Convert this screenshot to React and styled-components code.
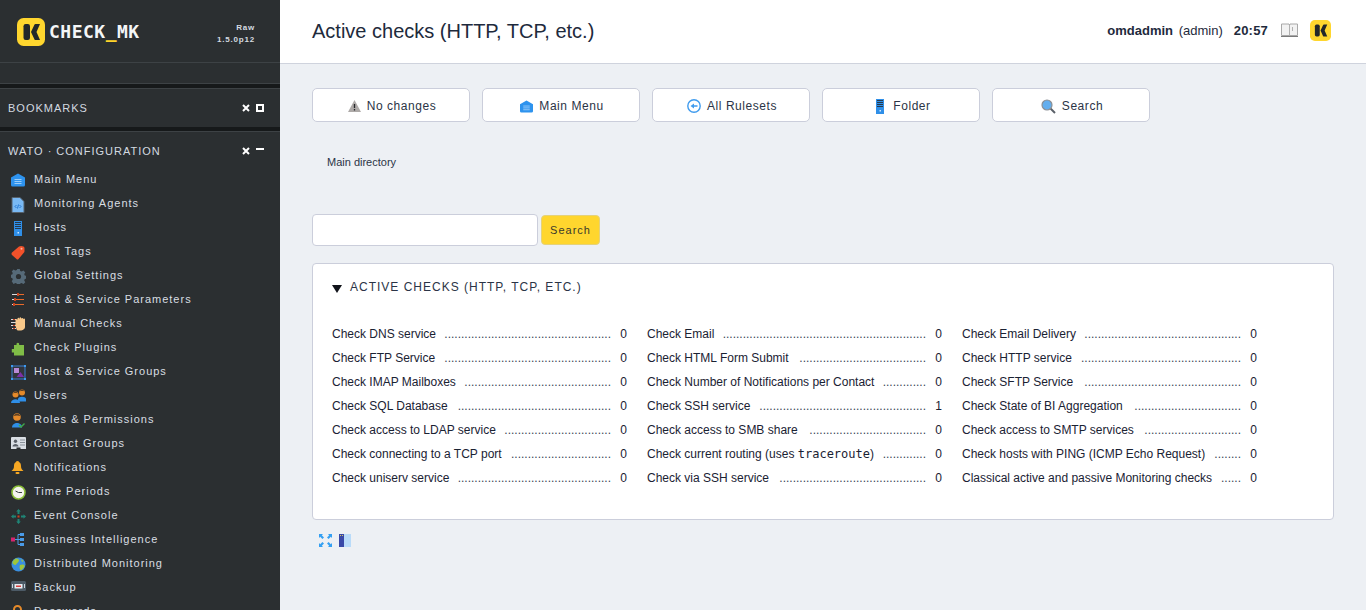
import React, { useLayoutEffect, useRef, useState } from 'react';
import styled, { createGlobalStyle } from 'styled-components';

const GlobalStyle = createGlobalStyle`
  html, body {
    margin: 0;
    padding: 0;
    height: 100%;
    overflow: hidden;
    background: #edf0f4;
    font-family: "Liberation Sans", Arial, sans-serif;
  }
  * {
    box-sizing: border-box;
  }
`;

const Page = styled.div`
  display: flex;
  height: 610px;
  overflow: hidden;
`;

const Sidebar = styled.aside`
  width: 280px;
  flex: none;
  height: 610px;
  overflow: hidden;
  background: #2b2f31;
  color: #d9dee2;
`;

const Brand = styled.div`
  height: 63px;
  display: flex;
  align-items: center;
  justify-content: space-between;
  padding: 1px 25px 0 17px;
  border-bottom: 1px solid #3d4245;
`;

const BrandLogo = styled.div`
  display: flex;
  align-items: center;
  gap: 4px;
`;

const Wordmark = styled.span`
  font-family: "DejaVu Sans Mono", monospace;
  font-weight: 700;
  font-size: 18px;
  letter-spacing: 0.5px;
  color: #f4f6f7;
  em {
    font-style: normal;
    color: #ffd42a;
  }
`;

const Version = styled.div`
  padding-top: 5px;
  font-size: 8px;
  font-weight: 700;
  letter-spacing: 0.8px;
  line-height: 12px;
  text-align: right;
  color: #d5dbe0;
`;

const Spacer = styled.div`
  height: 20px;
`;

const Snapin = styled.section`
  border-top: 1px solid #3d4245;
`;

const SnapinGap = styled.div`
  height: 4px;
  background: #16191a;
`;

const SnapinHead = styled.div`
  height: ${(p) => p.$height}px;
  padding: ${(p) => p.$top}px 16px 0 8px;
  display: flex;
  align-items: center;
  justify-content: space-between;
  border-top: 1px solid #3d4245;
  font-size: 11px;
  letter-spacing: 1px;
  color: #d3dae0;
`;

const SnapinControls = styled.div`
  display: flex;
  align-items: center;
  gap: 6px;
`;

const Menu = styled.ul`
  list-style: none;
  margin: 0;
  padding: 0;
`;

const MenuItem = styled.li`
  height: 24px;
  display: flex;
  align-items: center;
  gap: 8px;
  padding-left: 11px;
  font-size: 11px;
  letter-spacing: 1px;
  color: #d9dee2;
  white-space: nowrap;
`;

const MenuIcon = styled.span`
  width: 15px;
  height: 15px;
  flex: none;
  display: flex;
  margin-top: 2px;
`;

const Main = styled.main`
  flex: 1;
  min-width: 0;
  display: flex;
  flex-direction: column;
`;

const TopBar = styled.header`
  height: 64px;
  flex: none;
  display: flex;
  align-items: center;
  justify-content: space-between;
  padding: 0 35px 0 32px;
  background: #fff;
  border-bottom: 1px solid #cfd3dd;
`;

const Title = styled.h1`
  margin: 0;
  font-size: 20px;
  font-weight: 400;
  color: #1e2a3c;
`;

const TopInfo = styled.div`
  display: flex;
  align-items: center;
  gap: 12px;
  margin-top: -2px;
  font-size: 13px;
  color: #1e2a3c;
  b {
    font-weight: 700;
  }
`;

const UserName = styled.span`
  margin-right: -1px;
  word-spacing: 2px;
`;

const Clock = styled.b`
  margin-right: 1px;
  letter-spacing: 0.2px;
`;

const Content = styled.div`
  padding: 24px 32px 0;
`;

const Buttons = styled.div`
  display: flex;
  gap: 12px;
`;

const ActionButton = styled.button`
  width: 158px;
  height: 34px;
  display: flex;
  align-items: center;
  justify-content: center;
  gap: 6px;
  padding: 2px 0 0 2px;
  background: #fff;
  border: 1px solid #cbcedb;
  border-radius: 5px;
  font-family: inherit;
  font-size: 12px;
  letter-spacing: 0.55px;
  color: #2b3446;
`;

const Breadcrumb = styled.div`
  margin: 34px 0 0 15px;
  height: 13px;
  font-size: 11px;
  line-height: 13px;
  color: #2b3446;
`;

const SearchRow = styled.form`
  display: flex;
  align-items: center;
  gap: 3px;
  margin-top: 45px;
`;

const SearchInput = styled.input`
  width: 226px;
  height: 32px;
  background: #fff;
  border: 1px solid #cbcedb;
  border-radius: 4px;
`;

const SearchButton = styled.button`
  width: 59px;
  height: 30px;
  padding: 0;
  background: #ffd62e;
  border: 1px solid #e5d27a;
  border-radius: 4px;
  font-family: inherit;
  font-size: 11px;
  letter-spacing: 1px;
  color: #3a3a2c;
`;

const Panel = styled.section`
  margin-top: 17px;
  width: 1022px;
  height: 257px;
  padding: 15px 19px 0;
  background: #fff;
  border: 1px solid #cbcedb;
  border-radius: 4px;
`;

const PanelTitle = styled.div`
  display: flex;
  align-items: center;
  gap: 8px;
  height: 16px;
  font-size: 12px;
  letter-spacing: 1px;
  text-transform: uppercase;
  color: #2b3446;
`;

const Triangle = styled.span`
  width: 0;
  height: 0;
  margin-top: 3px;
  border-left: 5px solid transparent;
  border-right: 5px solid transparent;
  border-top: 8px solid #10131a;
`;

const RuleGrid = styled.div`
  display: grid;
  grid-template-columns: repeat(3, 295px);
  column-gap: 20px;
  grid-auto-rows: 24px;
  margin-top: 27px;
`;

const RuleRow = styled.div`
  display: flex;
  align-items: center;
  font-size: 12px;
  line-height: 14px;
  color: #1a2233;
  white-space: nowrap;
  code {
    font-family: "DejaVu Sans Mono", monospace;
    font-size: 12px;
    line-height: 1;
  }
`;

const Dots = styled.span`
  flex: 1;
  min-width: 0;
  height: 14px;
  overflow: hidden;
  text-align: right;
  margin: 0 8px;
  color: #3b4354;
`;

const Count = styled.span`
  width: 8px;
  text-align: right;
`;

const FooterIcons = styled.div`
  display: flex;
  align-items: center;
  gap: 7px;
  margin: 14px 0 0 7px;
`;

// as many dots as fit in the space left by the label
const Leader = () => {
  const ref = useRef(null);
  const [count, setCount] = useState(0);
  useLayoutEffect(() => {
    setCount(Math.floor(ref.current.clientWidth / 3.334));
  }, []);
  return <Dots ref={ref}>{'.'.repeat(count)}</Dots>;
};

const Logo = ({ size }) => (
  <svg width={size} height={size} viewBox="0 0 28 28">
    <rect width="28" height="28" rx="6.500" fill="#ffd62e" />
    <rect x="6.500" y="6" width="6.500" height="16" rx="2.200" fill="#23272a" />
    <path d="M14 14L17.500 6.500Q17.800 6 18.500 6H23L19.500 14L23 22H18.500Q17.800 22 17.500 21.500z" fill="#23272a" />
  </svg>
);

const MainMenuIcon = ({ size = 14 }) => (
  <svg width={size} height={size} viewBox="0 0 14 14">
    <path d="M0 4.500L7 .5l7 4V12a1.500 1.500 0 0 1-1.500 1.500h-11A1.500 1.500 0 0 1 0 12z" fill="#2e93ee" />
    <path d="M3.500 6.500h7M3.500 8.500h7M3.500 10.500h7" stroke="#9ccdf8" strokeWidth="1" />
  </svg>
);

const SmallMainMenuIcon = () => <MainMenuIcon size={13} />;

const AgentsIcon = () => (
  <svg width="14" height="16" viewBox="0 0 14 16">
    <path d="M1 .5h8l4 4V15.500H1z" fill="#79b9f4" stroke="#55616c" strokeWidth="1" />
    <path d="M5.500 8L4 9.500 5.500 11M8.500 8L10 9.500 8.500 11M7.500 7.500l-1 4" stroke="#2477d2" strokeWidth="1" fill="none" />
  </svg>
);

const HostIcon = () => (
  <svg width="14" height="15" viewBox="0 0 14 15">
    <rect x="3" y="0" width="8" height="15" fill="#2f8fe8" />
    <path d="M4 1.500h6M4 3.500h6M4 5.500h6M4 7.500h6" stroke="#27394a" strokeWidth="1" />
    <rect x="6.500" y="11" width="1.500" height="1.500" fill="#cfe6fb" />
  </svg>
);

const TagIcon = () => (
  <svg width="14" height="15" viewBox="0 0 14 15">
    <path d="M1 7.500L8 1.500Q9 1 10 1L12.500 1.500Q13.500 2 13.500 3V6Q13.500 7 13 7.500L7.500 14Q6.500 15 5.500 14L1 10Q0 8.500 1 7.500z" fill="#f2512a" />
    <circle cx="10.500" cy="3.800" r="1" fill="#f9b49d" />
  </svg>
);

const GearIcon = () => (
  <svg width="15" height="15" viewBox="0 0 15 15">
    <path
      d="M6.200 0h2.600l.4 2 1.500.6L12.400 1.500l1.900 1.900-1.100 1.700.6 1.500 2 .4v2.600l-2 .4-.6 1.500 1.100 1.700-1.900 1.900-1.700-1.100-1.500.6-.4 2H6.200l-.4-2-1.500-.6-1.700 1.100L.7 12.200l1.100-1.700-.6-1.500-2-.4V6l2-.4.6-1.500L.7 2.400 2.600.5l1.700 1.100 1.500-.6z"
      fill="#566a78"
    />
    <circle cx="7.500" cy="7.500" r="2.600" fill="#2b2f31" />
  </svg>
);

const ParamsIcon = () => (
  <svg width="14" height="13" viewBox="0 0 14 13">
    <path d="M1 1.500h12M1 6.500h12M1 11.500h12" stroke="#d7d9da" strokeWidth="1.200" />
    <path d="M7 1.500h6M4 6.500h9M3 11.500h10" stroke="#ea6a2a" strokeWidth="1.200" />
    <rect x="6" y="0" width="2" height="3" fill="#c9421e" />
    <rect x="3" y="5" width="2" height="3" fill="#c9421e" />
    <rect x="2" y="10" width="2" height="3" fill="#c9421e" />
  </svg>
);

const HandIcon = () => (
  <svg width="15" height="15" viewBox="0 0 15 15">
    <path d="M0 2.500h5M0 5.500h5M0 8.500h5M1 11.500h4" stroke="#d7d9da" strokeWidth="1" />
    <path d="M2 2.500h2M2 8.500h2M2 11.500h2" stroke="#c9421e" strokeWidth="1" />
    <path d="M4.500 3c0-1.200 1.800-1.200 1.800 0 0-3 2-3 2-.5 0-2.800 2-2.800 2-.2 0-1.800 1.800-1.800 1.800 0 0-1 1.900-1 1.900 0v7.500c0 2.700-2.500 3.700-4.500 3.700S6 14 5.500 12L4.500 9z" fill="#f9c98a" />
  </svg>
);

const PluginIcon = () => (
  <svg width="14" height="15" viewBox="0 0 14 15">
    <path d="M3 4h2.600C4.700 1 9 1 8.100 4H13v10.500H3v-3H.8V8H3z" fill="#80bd47" />
  </svg>
);

const GroupsIcon = () => (
  <svg width="15" height="15" viewBox="0 0 15 15">
    <rect x="1" y="1" width="13" height="13" fill="#33363c" stroke="#3a7fd0" strokeWidth="1" />
    <path d="M0 0h2v2H0zM13 0h2v2h-2zM0 13h2v2H0zM13 13h2v2h-2z" fill="#3d9bf0" />
    <rect x="3" y="3" width="5" height="5" fill="#b98ad6" />
    <path d="M5.500 12l4-5 3.500 5z" fill="#7b2fa8" />
  </svg>
);

const UsersIcon = () => (
  <svg width="15" height="14" viewBox="0 0 15 14">
    <path d="M7 10c0-3 8-3 8 0v2.500H7z" fill="#2f8fe8" />
    <circle cx="11" cy="3.500" r="3" fill="#e58a2a" />
    <path d="M8.300 2.500a3 3 0 0 1 5.400 0c-1.800-.6-3.600-.6-5.400 0z" fill="#5c4126" />
    <path d="M0 14c0-5 9-5 9 0z" fill="#2f8fe8" />
    <circle cx="4.500" cy="5.500" r="3" fill="#e58a2a" />
    <path d="M1.800 4.500a3 3 0 0 1 5.400 0c-1.800-.6-3.600-.6-5.400 0z" fill="#5c4126" />
  </svg>
);

const RolesIcon = () => (
  <svg width="14" height="15" viewBox="0 0 14 15">
    <path d="M1 14.500c0-6 10-6 10 0z" fill="#2f8fe8" />
    <circle cx="6" cy="4" r="3.800" fill="#e58a2a" />
    <path d="M2.500 3a3.800 3.800 0 0 1 7 0c-2.300-.7-4.700-.7-7 0z" fill="#5c4126" />
    <path d="M8 12l2 2 3.500-3.500" stroke="#3ea84a" strokeWidth="1.400" fill="none" />
  </svg>
);

const ContactIcon = () => (
  <svg width="15" height="12" viewBox="0 0 15 12">
    <path d="M1 0h13a1 1 0 0 1 1 1v11H9.500V10.500h-4V12H0V1a1 1 0 0 1 1-1z" fill="#d9dee4" />
    <circle cx="4.500" cy="4.200" r="1.700" fill="#5a6068" />
    <path d="M1.500 9.500c0-3.500 6-3.500 6 0z" fill="#5a6068" />
    <path d="M9 3h5M9 5.500h5M9 8h5" stroke="#8a929a" strokeWidth="1" />
  </svg>
);

const BellIcon = () => (
  <svg width="13" height="13" viewBox="0 0 13 13">
    <path d="M6.500 0C8 0 8 1 8 1c1.500.8 2 2 2 4 0 2.500 1 3.500 2.500 5H.5C2 8.500 3 7.500 3 5c0-2 .5-3.200 2-4 0 0 0-1 1.500-1z" fill="#f7a823" />
    <rect x="4.500" y="11" width="4" height="2" rx="1" fill="#f7a823" />
  </svg>
);

const ClockIcon = () => (
  <svg width="15" height="15" viewBox="0 0 15 15">
    <circle cx="7.500" cy="7.500" r="6.500" fill="#f4f4ee" stroke="#8cbf3a" strokeWidth="1.600" />
    <path d="M7.500 7.500L4.500 6M7.500 7.500H11" stroke="#3a3f42" strokeWidth="1" />
  </svg>
);

const EventIcon = () => (
  <svg width="15" height="15" viewBox="0 0 15 15">
    <path
      d="M7.500 0l2.300 2.500H8.500V5h-2V2.500H5.200zM7.500 15l-2.300-2.500h1.300V10h2v2.500h1.300zM0 7.500l2.500-2.300v1.300H5v2H2.500v1.300zM15 7.500l-2.500 2.300V8.500H10v-2h2.500V5.200z"
      fill="#1f8576"
    />
    <rect x="6.500" y="6.500" width="2" height="2" fill="#c9421e" />
  </svg>
);

const BiIcon = () => (
  <svg width="14" height="13" viewBox="0 0 14 13">
    <rect x="0" y="4.500" width="4" height="4" fill="#d6246e" />
    <path d="M4 6.500h4M7 1.500v10M7 1.500h2M7 6.500h2M7 11.500h2" stroke="#4a9be8" strokeWidth="1" fill="none" />
    <rect x="9" y="0" width="4" height="3" fill="#4a9be8" />
    <rect x="9" y="5" width="4" height="3" fill="#4a9be8" />
    <rect x="9" y="10" width="4" height="3" fill="#4a9be8" />
  </svg>
);

const GlobeIcon = () => (
  <svg width="15" height="15" viewBox="0 0 15 15">
    <circle cx="7.500" cy="7.500" r="7" fill="#3a8fe0" />
    <path d="M4 2c2-1 4 0 4 1.500S6 6 5 7.500 2 7 1.500 6 2.500 3 4 2zM9 8c2-1 4-.5 4.500.5S12 12 10.500 13 8 10 9 8zM10 2l2.500 2L11 5z" fill="#9fc63b" />
  </svg>
);

const BackupIcon = () => (
  <svg width="15" height="11" viewBox="0 0 15 11">
    <rect width="15" height="10" rx="1.500" fill="#4c5a66" />
    <rect x="3.500" y="3" width="8" height="4.500" fill="#e9edf0" />
    <rect x="5" y="4.500" width="5" height="1.500" fill="#d63e3e" />
    <path d="M1.500 3v4M13.500 3v4" stroke="#c9d2d9" strokeWidth="1" />
  </svg>
);

const KeyIcon = () => (
  <svg width="13" height="15" viewBox="0 0 13 15">
    <circle cx="6.500" cy="4.500" r="3.500" fill="none" stroke="#e58a2a" strokeWidth="2" />
  </svg>
);

const WarnIcon = () => (
  <svg width="13" height="12" viewBox="0 0 13 12">
    <path d="M6.500 0L13 12H0z" fill="#aeaaa8" />
    <path d="M6.500 4v4M6.500 9v1.500" stroke="#25262a" strokeWidth="1.300" />
  </svg>
);

const BackIcon = () => (
  <svg width="14" height="14" viewBox="0 0 14 14">
    <circle cx="7" cy="7" r="6.200" fill="#fff" stroke="#3f9bee" strokeWidth="1.400" />
    <path d="M3.500 7L7 4.500v1.700h3.500v1.600H7v1.700z" fill="#3f9bee" />
  </svg>
);

const LensIcon = () => (
  <svg width="15" height="15" viewBox="0 0 15 15">
    <path d="M9.500 9.500L14 14" stroke="#5a6068" strokeWidth="2" />
    <circle cx="6" cy="6" r="5" fill="#63aeee" stroke="#8b8f94" strokeWidth="1.200" />
  </svg>
);

const BookIcon = () => (
  <svg width="17" height="15" viewBox="0 0 17 15">
    <path d="M.5 1h7.500l.5 1 .5-1h7.500v11.500H.5z" fill="#f2f2f2" stroke="#a8a8a8" strokeWidth="1" />
    <path d="M8.500 2v10.500M11.500 4v4" stroke="#b0b0b0" strokeWidth="1" />
    <path d="M0 13h17v1H0z" fill="#7a7a7a" />
  </svg>
);

const ExpandIcon = () => (
  <svg width="13" height="13" viewBox="0 0 13 13">
    <path
      d="M0 0h4L2.800 1.200 5 3.400 3.400 5 1.200 2.800 0 4zM13 0v4l-1.200-1.200L9.600 5 8 3.400l2.200-2.200L9 0zM0 13V9l1.200 1.200L3.400 8 5 9.600l-2.200 2.200L4 13zM13 13H9l1.200-1.200L8 9.600 9.600 8l2.200 2.200L13 9z"
      fill="#35a0f2"
    />
  </svg>
);

const ColumnsIcon = () => (
  <svg width="12" height="13" viewBox="0 0 12 13">
    <rect width="12" height="13" fill="#b9dbf9" />
    <rect width="5" height="13" fill="#3949a8" />
    <rect x="1" y="1" width="1" height="1" fill="#d9c65a" />
    <rect x="3" y="1" width="1" height="1" fill="#d9c65a" />
  </svg>
);

const CloseGlyph = () => (
  <svg width="8" height="8" viewBox="0 0 8 8">
    <path d="M1 1l6 6M7 1L1 7" stroke="#fff" strokeWidth="2" />
  </svg>
);

const SquareGlyph = () => (
  <svg width="8" height="8" viewBox="0 0 8 8">
    <rect x="1" y="1" width="6" height="6" fill="none" stroke="#fff" strokeWidth="2" />
  </svg>
);

const MinusGlyph = () => (
  <svg width="8" height="8" viewBox="0 0 8 8">
    <rect y="1" width="8" height="2" fill="#fff" />
  </svg>
);

const menu = [
  ['Main Menu', MainMenuIcon],
  ['Monitoring Agents', AgentsIcon],
  ['Hosts', HostIcon],
  ['Host Tags', TagIcon],
  ['Global Settings', GearIcon],
  ['Host & Service Parameters', ParamsIcon],
  ['Manual Checks', HandIcon],
  ['Check Plugins', PluginIcon],
  ['Host & Service Groups', GroupsIcon],
  ['Users', UsersIcon],
  ['Roles & Permissions', RolesIcon],
  ['Contact Groups', ContactIcon],
  ['Notifications', BellIcon],
  ['Time Periods', ClockIcon],
  ['Event Console', EventIcon],
  ['Business Intelligence', BiIcon],
  ['Distributed Monitoring', GlobeIcon],
  ['Backup', BackupIcon],
  ['Passwords', KeyIcon],
];

const actions = [
  ['No changes', WarnIcon],
  ['Main Menu', SmallMainMenuIcon],
  ['All Rulesets', BackIcon],
  ['Folder', HostIcon],
  ['Search', LensIcon],
];

const rules = [
  ['Check DNS service', 0],
  ['Check Email', 0],
  ['Check Email Delivery', 0],
  ['Check FTP Service', 0],
  ['Check HTML Form Submit', 0],
  ['Check HTTP service', 0],
  ['Check IMAP Mailboxes', 0],
  ['Check Number of Notifications per Contact', 0],
  ['Check SFTP Service', 0],
  ['Check SQL Database', 0],
  ['Check SSH service', 1],
  ['Check State of BI Aggregation', 0],
  ['Check access to LDAP service', 0],
  ['Check access to SMB share', 0],
  ['Check access to SMTP services', 0],
  ['Check connecting to a TCP port', 0],
  [<>Check current routing (uses <code>traceroute</code>)</>, 0],
  ['Check hosts with PING (ICMP Echo Request)', 0],
  ['Check uniserv service', 0],
  ['Check via SSH service', 0],
  ['Classical active and passive Monitoring checks', 0],
];

export default function App() {
  return (
    <Page>
      <GlobalStyle />
      <Sidebar>
        <Brand>
          <BrandLogo>
            <Logo size={28} />
            <Wordmark>CHECK<em>_</em>MK</Wordmark>
          </BrandLogo>
          <Version>
            <div>Raw</div>
            <div>1.5.0p12</div>
          </Version>
        </Brand>
        <Spacer />
        <Snapin>
          <SnapinGap />
          <SnapinHead $height={39} $top={0}>
            BOOKMARKS
            <SnapinControls>
              <CloseGlyph />
              <SquareGlyph />
            </SnapinControls>
          </SnapinHead>
          <SnapinGap />
          <SnapinHead $height={36} $top={2}>
            WATO · CONFIGURATION
            <SnapinControls>
              <CloseGlyph />
              <MinusGlyph />
            </SnapinControls>
          </SnapinHead>
          <Menu>
            {menu.map(([label, Icon]) => (
              <MenuItem key={label}>
                <MenuIcon>
                  <Icon />
                </MenuIcon>
                {label}
              </MenuItem>
            ))}
          </Menu>
        </Snapin>
      </Sidebar>
      <Main>
        <TopBar>
          <Title>Active checks (HTTP, TCP, etc.)</Title>
          <TopInfo>
            <UserName>
              <b>omdadmin</b> (admin)
            </UserName>
            <Clock>20:57</Clock>
            <BookIcon />
            <Logo size={21} />
          </TopInfo>
        </TopBar>
        <Content>
          <Buttons>
            {actions.map(([label, Icon]) => (
              <ActionButton key={label}>
                <Icon />
                {label}
              </ActionButton>
            ))}
          </Buttons>
          <Breadcrumb>Main directory</Breadcrumb>
          <SearchRow>
            <SearchInput />
            <SearchButton type="button">Search</SearchButton>
          </SearchRow>
          <Panel>
            <PanelTitle>
              <Triangle />
              Active checks (HTTP, TCP, etc.)
            </PanelTitle>
            <RuleGrid>
              {rules.map(([label, count], i) => (
                <RuleRow key={i}>
                  <span>{label}</span>
                  <Leader />
                  <Count>{count}</Count>
                </RuleRow>
              ))}
            </RuleGrid>
          </Panel>
          <FooterIcons>
            <ExpandIcon />
            <ColumnsIcon />
          </FooterIcons>
        </Content>
      </Main>
    </Page>
  );
}
